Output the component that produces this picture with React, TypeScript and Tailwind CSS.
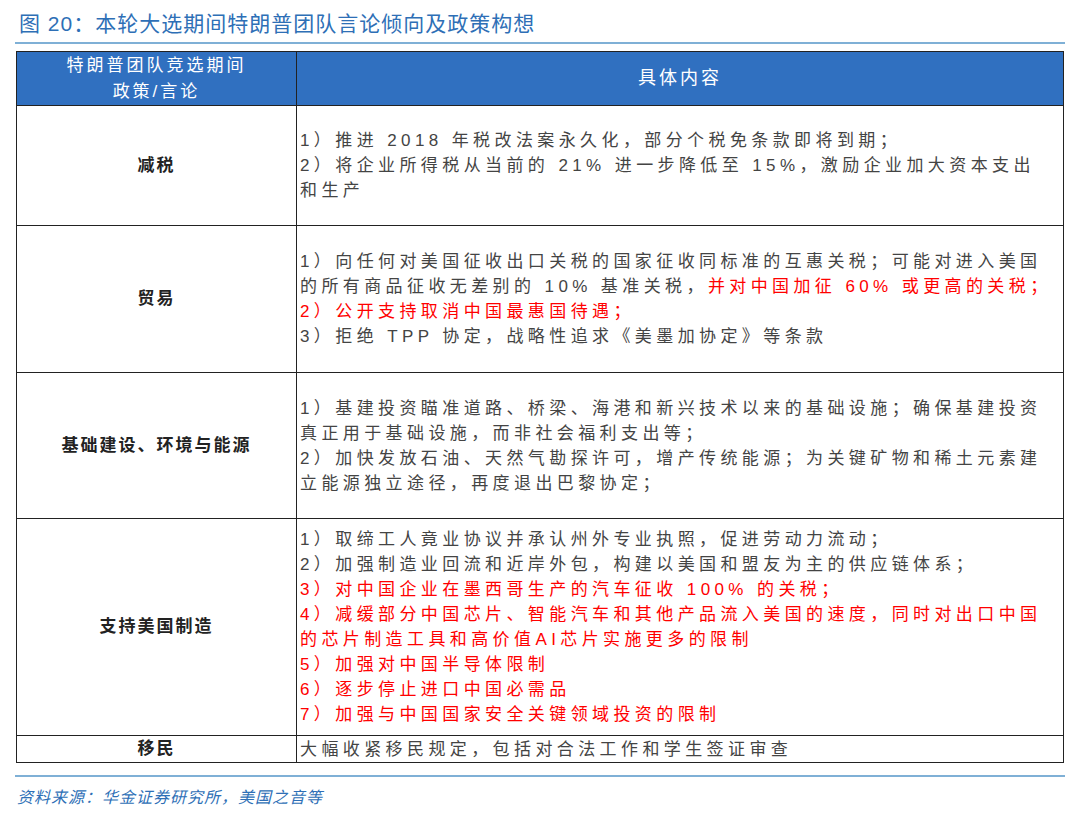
const F = { fontFamily: '"Liberation Sans","Noto Sans CJK SC",sans-serif' };
const R = 'text-[#ff0000]';
type L = { t: string; red?: boolean };
const rows: { h: string; lines: L[]; hh: number }[] = [
  { h: '减税', hh: 120, lines: [
    { t: '1）推进 2018 年税改法案永久化，部分个税免条款即将到期；' },
    { t: '2）将企业所得税从当前的 21% 进一步降低至 15%，激励企业加大资本支出和生产' },
  ]},
  { h: '贸易', hh: 147, lines: [] },
  { h: '基础建设、环境与能源', hh: 146, lines: [
    { t: '1）基建投资瞄准道路、桥梁、海港和新兴技术以来的基础设施；确保基建投资真正用于基础设施，而非社会福利支出等；' },
    { t: '2）加快发放石油、天然气勘探许可，增产传统能源；为关键矿物和稀土元素建立能源独立途径，再度退出巴黎协定；' },
  ]},
  { h: '支持美国制造', hh: 217, lines: [
    { t: '1）取缔工人竟业协议并承认州外专业执照，促进劳动力流动；' },
    { t: '2）加强制造业回流和近岸外包，构建以美国和盟友为主的供应链体系；' },
    { t: '3）对中国企业在墨西哥生产的汽车征收 100% 的关税；', red: true },
    { t: '4）减缓部分中国芯片、智能汽车和其他产品流入美国的速度，同时对出口中国的芯片制造工具和高价值AI芯片实施更多的限制', red: true },
    { t: '5）加强对中国半导体限制', red: true },
    { t: '6）逐步停止进口中国必需品', red: true },
    { t: '7）加强与中国国家安全关键领域投资的限制', red: true },
  ]},
  { h: '移民', hh: 27, lines: [{ t: '大幅收紧移民规定，包括对合法工作和学生签证审查' }] },
];
export default function App() {
  return (
    <div className="w-[1080px] h-[821px] bg-white relative" style={F}>
      <div className="pl-[19px] pt-[9px] text-[21px] text-[#2e6fb6] tracking-[1px] leading-[30px]">图 20：本轮大选期间特朗普团队言论倾向及政策构想</div>
      <div className="mx-[15px] mt-[3px] h-[2px] bg-[#7fb0d6]" />
      <div className="mx-[16px] mt-[7px] border border-[#222] text-[17px] text-[#444]">
        <div className="flex bg-[#3070c0] text-white h-[53px]">
          <div className="w-[280px] border-r border-[#222] flex flex-col items-center justify-center leading-[26px] tracking-[3px] text-[17px]">
            <span>特朗普团队竞选期间</span><span>政策/言论</span>
          </div>
          <div className="flex-1 flex items-center justify-center tracking-[3px] text-[18px]">具体内容</div>
        </div>
        {rows.map((r, i) => (
          <div key={i} className="flex border-t border-[#222]" style={{ height: r.hh }}>
            <div className="w-[280px] border-r border-[#222] flex items-center justify-center font-bold tracking-[2px] text-[#222]">{r.h}</div>
            <div className="flex-1 flex flex-col justify-center pl-[3px] pr-[8px] leading-[25px] tracking-[4.4px]">
              {i === 1 ? (
                <>
                  <div>1）向任何对美国征收出口关税的国家征收同标准的互惠关税；可能对进入美国的所有商品征收无差别的 10% 基准关税，<span className={R}>并对中国加征 60% 或更高的关税；</span></div>
                  <div className={R}>2）公开支持取消中国最惠国待遇；</div>
                  <div>3）拒绝 TPP 协定，战略性追求《美墨加协定》等条款</div>
                </>
              ) : r.lines.map((l, j) => <div key={j} className={l.red ? R : ''}>{l.t}</div>)}
            </div>
          </div>
        ))}
      </div>
      <div className="mx-[15px] mt-[12px] h-[2px] bg-[#7fb0d6]" />
      <div className="pl-[17px] pt-[9px] text-[16px] italic text-[#2e6fb6] tracking-[1px]">资料来源：华金证券研究所，美国之音等</div>
    </div>
  );
}
